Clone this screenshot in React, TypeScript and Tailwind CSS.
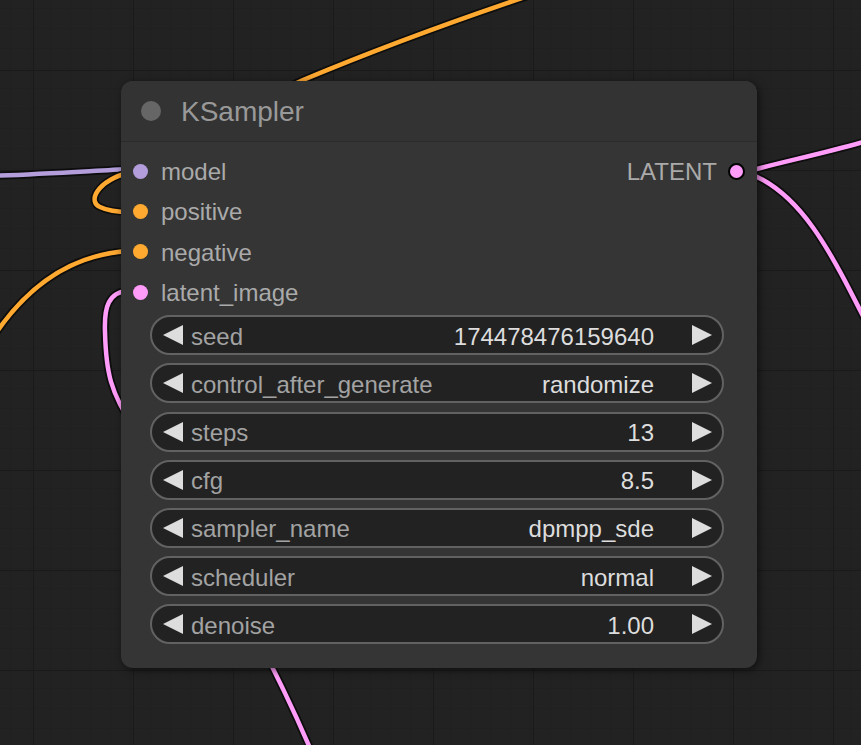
import React from "react";

type Slot = { name: string; color: string };

const inputs: Slot[] = [
  { name: "model", color: "#b39ddb" },
  { name: "positive", color: "#ffa931" },
  { name: "negative", color: "#ffa931" },
  { name: "latent_image", color: "#ff9cf9" },
];

const widgets: { label: string; value: string }[] = [
  { label: "seed", value: "174478476159640" },
  { label: "control_after_generate", value: "randomize" },
  { label: "steps", value: "13" },
  { label: "cfg", value: "8.5" },
  { label: "sampler_name", value: "dpmpp_sde" },
  { label: "scheduler", value: "normal" },
  { label: "denoise", value: "1.00" },
];

function Wire({ d, color }: { d: string; color: string }) {
  return (
    <g fill="none" strokeLinecap="round">
      <path d={d} stroke="#0d0d0d" strokeWidth={8} />
      <path d={d} stroke={color} strokeWidth={4.5} />
    </g>
  );
}

function Arrow({ dir }: { dir: "left" | "right" }) {
  return (
    <svg width="20" height="20" viewBox="0 0 20 20" className="shrink-0">
      <polygon
        points={dir === "left" ? "20,0 20,20 0,10" : "0,0 0,20 20,10"}
        fill="#dddddd"
      />
    </svg>
  );
}

export default function App() {
  return (
    <div
      className="relative w-[861px] h-[745px] overflow-hidden bg-[#222222]"
      style={{ fontFamily: '"Liberation Sans", Arial, sans-serif' }}
    >
      {/* canvas grid + wires */}
      <svg
        className="absolute inset-0"
        width="861"
        height="745"
        viewBox="0 0 861 745"
      >
        <defs>
          <pattern id="g" width="20" height="20" patternUnits="userSpaceOnUse" x="10" y="8">
            <path d="M0 0 H20 M0 0 V20" stroke="#1d1d1d" strokeWidth="1" fill="none" />
          </pattern>
          <pattern id="G" width="100" height="100" patternUnits="userSpaceOnUse" x="33" y="70">
            <path d="M0 0 H100 M0 0 V100" stroke="#1a1a1a" strokeWidth="2" fill="none" />
          </pattern>
        </defs>
        <rect width="861" height="745" fill="url(#g)" />
        <rect width="861" height="745" fill="url(#G)" />

        {/* orange from top */}
        <Wire d="M250 105 L 303 80 C 370 52, 450 22, 540 -8" color="#ffa931" />
        {/* model lavender */}
        <Wire d="M-10 176 C 40 174, 90 171, 130 169" color="#b39ddb" />
        {/* positive loop */}
        <Wire d="M130 172 C 95 182, 88 202, 100 207 C 108 211, 118 212, 130 212" color="#ffa931" />
        {/* negative */}
        <Wire d="M130 251 C 70 254, 25 287, -10 342" color="#ffa931" />
        {/* latent image pink */}
        <Wire
          d="M130 290 C 108 292, 104 307, 105 332 C 106 372, 110 392, 135 430 C 190 515, 265 640, 315 760"
          color="#ff9cf9"
        />
        {/* latent output */}
        <Wire d="M745 172 C 790 160, 830 152, 870 140" color="#ff9cf9" />
        <Wire d="M745 172 C 800 190, 830 250, 870 330" color="#ff9cf9" />
      </svg>

      {/* node */}
      <div className="absolute left-[121px] top-[81px] w-[636px] h-[587px] rounded-[12px] bg-[#353535] shadow-[2px_2px_8px_rgba(0,0,0,0.55)] flex flex-col">
        {/* header */}
        <div className="h-[61px] shrink-0 flex items-center pl-[20px] gap-[20px] border-b border-[#2b2b2b] rounded-t-[12px] bg-[#333333]">
          <div className="w-[20px] h-[20px] rounded-full bg-[#666666]" />
          <span className="text-[28px] leading-none text-[#999999] pt-[2px]">KSampler</span>
        </div>

        {/* slots */}
        <div className="relative pt-[9px]">
          {inputs.map((s, i) => (
            <div key={s.name} className="h-[40.3px] flex items-center pl-[12px] gap-[13px]">
              <div
                className="w-[15px] h-[15px] rounded-full"
                style={{ backgroundColor: s.color }}
              />
              <span className="text-[24px] leading-none text-[#aaaaaa] pt-[2px]">{s.name}</span>
              {i === 0 && (
                <div className="ml-auto flex items-center gap-[11px] pr-[12px]">
                  <span className="text-[24px] leading-none text-[#aaaaaa] pt-[2px]">LATENT</span>
                  <div className="w-[17px] h-[17px] rounded-full bg-[#ff9cf9] border-2 border-black" />
                </div>
              )}
            </div>
          ))}
        </div>

        {/* widgets */}
        <div className="flex flex-col gap-[8.2px] pl-[29px] pr-[33px] mt-[3px]">
          {widgets.map((w) => (
            <div
              key={w.label}
              className="h-[40px] rounded-full border-2 border-[#626262] bg-[#222222] flex items-center pl-[11px] pr-[10px]"
            >
              <Arrow dir="left" />
              <span className="ml-[8px] text-[24px] leading-none text-[#a3a3a3] pt-[3px]">{w.label}</span>
              <span className="ml-auto text-[24px] leading-none text-[#dddddd] pt-[3px]">{w.value}</span>
              <div className="ml-[38px]">
                <Arrow dir="right" />
              </div>
            </div>
          ))}
        </div>
      </div>
    </div>
  );
}
